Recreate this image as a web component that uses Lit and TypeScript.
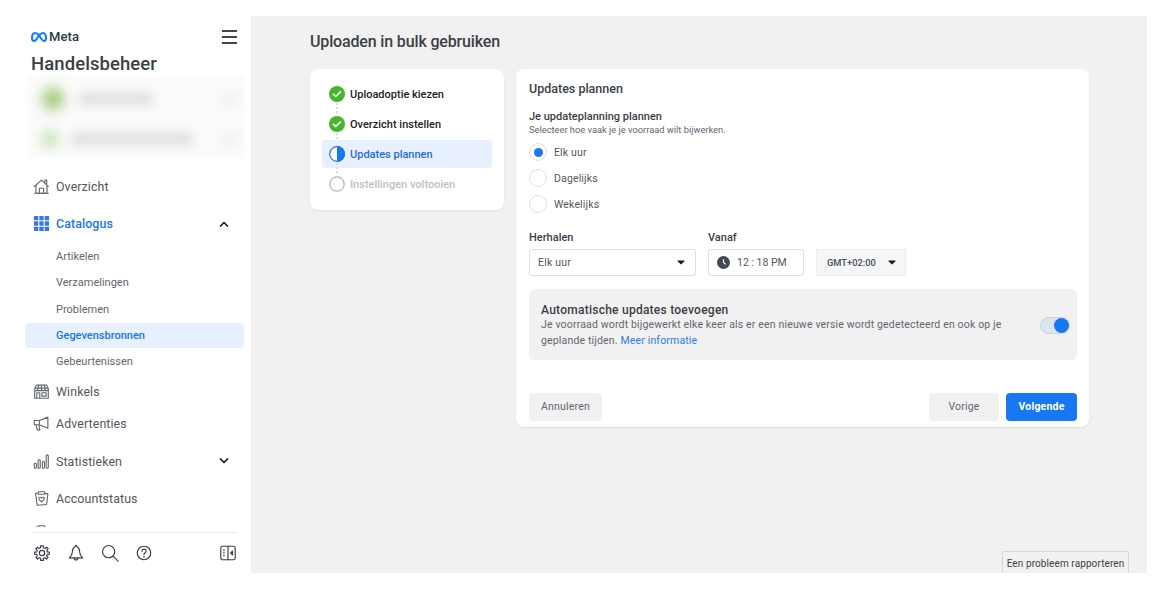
import { LitElement, html, css, svg } from "lit";
import { customElement } from "lit/decorators.js";

const ic = (body: unknown, size = 17, vb = "0 0 20 20") => html`<svg width=${size} height=${size} viewBox=${vb} fill="none" stroke="#606770" stroke-width="1.300" stroke-linecap="round" stroke-linejoin="round">${body}</svg>`;

const icons: Record<string, unknown> = {
  home: ic(svg`<path d="M1.500 10 10 2.500l8 7.500M3.500 8.500V18h13V8.500M14 4.500V2.500h2.200v4M7.500 18v-6h5v6"/><path d="M2 18h16"/>`),
  store: ic(svg`<path d="M4 2.500h12l2 4v2.500H2V6.500zM2 9v9h16V9M6.500 2.500 5.500 9M10 2.500V9M13.500 2.500l1 6.500M2.500 6h15M4.500 11.500h3.500V18H4.500zM10.500 11.500h5v4h-5z"/>`),
  ads: ic(svg`<path d="M1.500 6.500h6L17.500 2.500v13L7.500 11.500h-6zM3.500 11.500l1.500 6h3l-1-6M7.500 6.500v5"/>`),
  stats: ic(svg`<rect x="1.500" y="12" width="2.500" height="6" rx="1"/><rect x="6" y="8" width="2.500" height="10" rx="1"/><rect x="11" y="10" width="2.500" height="8" rx="1"/><rect x="15.500" y="2.500" width="2.500" height="15.500" rx="1"/>`),
  status: ic(svg`<path d="M5 3.500 3 4 5 18l11-1 1.500-12.500-3-.500M6.500 2h7l.500 3H6z"/><path d="M10 14l-3-3c-1.200-2 1.500-3.500 3-1.500 1.500-2 4.200-.5 3 1.500z"/>`),
};

const fsz = 18;
const foot = {
  gear: ic(svg`<circle cx="10" cy="10" r="3"/><path d="m8.300 2 .1 2.200-1.900.8L5 3.500 3.200 5.300 4.800 7 4 8.800l-2.200.1v2.400l2.200.1.800 1.800-1.600 1.600L5 16.700l1.500-1.500 1.900.8.100 2.200h3l.1-2.200 1.900-.8 1.500 1.500 1.800-1.800-1.600-1.600.8-1.800 2.200-.1V8.900L16 8.800 15.200 7l1.600-1.700L15 3.500l-1.500 1.500-1.900-.8-.1-2.200z"/>`, fsz),
  bell: ic(svg`<path d="M10 1.500c-1 0-1 1-1 1.500C6.500 4 6 6 6 8.500 6 11.500 4.500 13.500 2.500 15.500h15C15.500 13.500 14 11.500 14 8.500c0-2.500-.5-4.500-3-5.500 0-.5 0-1.500-1-1.500zM8 15.500c0 3 4 3 4 0"/>`, fsz),
  search: ic(svg`<circle cx="8.500" cy="8.500" r="6.800"/><path d="m13.500 13.500 5.500 5.500"/>`, fsz),
  help: ic(svg`<circle cx="10" cy="10" r="7.500"/><path d="M7.800 8c0-3 4.600-3 4.600 0 0 1.800-2.400 1.800-2.400 3.600"/><circle cx="10" cy="14" r=".4"/>`, fsz),
  panel: ic(svg`<rect x="2" y="2.500" width="16" height="15" rx="2"/><path d="M10 2.500v15M5.500 6v1M5.500 9v1M5.500 12v1"/><path d="M15 8v4l-2-2z" fill="#3b3f45"/>`, fsz),
};

const check = html`<svg class="stepi" width="16" height="16" viewBox="0 0 16 16"><circle cx="8" cy="8" r="8" fill="#42b72a"/><path d="m4.500 8.300 2.400 2.200 4.500-4.600" fill="none" stroke="#fff" stroke-width="1.700" stroke-linecap="round" stroke-linejoin="round"/></svg>`;
const half = html`<svg class="stepi" width="16" height="16" viewBox="0 0 16 16"><circle cx="8" cy="8" r="7.300" fill="#fff" stroke="#1877f2" stroke-width="1.200"/><path d="M8 0a8 8 0 0 1 0 16z" fill="#1877f2"/></svg>`;
const empty = html`<svg class="stepi" width="16" height="16" viewBox="0 0 16 16"><circle cx="8" cy="8" r="7.200" fill="#fff" stroke="#b4b7bb" stroke-width="1.300"/></svg>`;
const caret = html`<svg width="8" height="5" viewBox="0 0 10 6"><path d="M1 .5h8a.6.6 0 0 1 .4 1L5.400 5.300a.6.6 0 0 1-.8 0L.6 1.500a.6.6 0 0 1 .4-1z" fill="#1c1e21"/></svg>`;
const chevUp = html`<svg width="10" height="6" viewBox="0 0 10 6"><path d="m1.500 5 3.500-3.500L8.500 5" fill="none" stroke="#1c1e21" stroke-width="1.700" stroke-linecap="round" stroke-linejoin="round"/></svg>`;
const chevDown = html`<svg width="10" height="6" viewBox="0 0 10 6"><path d="m1.500 1 3.500 3.500L8.500 1" fill="none" stroke="#1c1e21" stroke-width="1.700" stroke-linecap="round" stroke-linejoin="round"/></svg>`;

@customElement("app-root")
export class AppRoot extends LitElement {
  static styles = css`
    :host { display: block; width: 1160px; height: 592px; background: #fff; font-family: Roboto, "Liberation Sans", sans-serif; color: #444950; overflow: hidden; }
    * { box-sizing: border-box; }
    .page { display: flex; height: 592px; padding: 16px 13px 19px 0; }
    .side { width: 251px; flex: none; display: flex; flex-direction: column; padding: 0 7px 0 0; }
    .brandrow { display: flex; align-items: center; justify-content: space-between; padding: 12px 7px 0 31px; height: 29px; }
    .meta { display: flex; align-items: center; gap: 2px; font-size: 13px; font-weight: 500; color: #2a3a44; letter-spacing: .1px; }
    .burger { display: flex; flex-direction: column; gap: 4px; width: 15px; }
    .burger i { display: block; height: 2px; background: #444950; }
    h1 { margin: 8px 0 0 31px; font-size: 18.500px; line-height: 22px; font-weight: 500; color: #3b3f45; letter-spacing: .08px; }
    .blurwrap { margin: 0 0 0 27px; height: 83px; width: 218px; overflow: hidden; background: #fbfbfb; display: flex; flex-direction: column; gap: 19px; padding-top: 12px; }
    .brow { display: flex; align-items: center; gap: 14px; filter: blur(6px); padding-left: 14px; }
    .dot { width: 24px; height: 24px; border-radius: 50%; background: #aed08c; flex: none; }
    .dot.s { width: 18px; height: 18px; background: #cbe4b8; }
    .bar { height: 10px; width: 74px; background: #d8d8d8; }
    .bar.l { width: 122px; margin-left: -2px; }
    .tail { width: 14px; height: 10px; background: #ececec; margin-left: auto; margin-right: 8px; }
    .nav { height: 360px; margin-top: 9px; overflow: hidden; padding-left: 25px; }
    .item { display: flex; align-items: center; padding: 0 15px 0 8px; gap: 6px; font-size: 12.400px; color: #53575d; }
    .item.nudge { padding-top: 2px; }
    .item .lab { flex: 1; letter-spacing: .1px; }
    .item.blue { color: #1877f2; font-weight: 500; }
    .sub { height: 26px; display: flex; align-items: center; padding-left: 31px; font-size: 11px; color: #606770; border-radius: 4px; }
    .sub.on { height: 25px; background: #e7f0fc; color: #1877f2; font-weight: 500; margin: 1px 0 0; }
    .sub.p { margin-top: 1px; }
    .footer { margin: 5px 7px 0 31px; border-top: 1px solid #ebebeb; height: 41px; display: flex; align-items: center; gap: 16px; padding-left: 2px; }
    .footer svg { display: block; stroke: #3b3f45; }
    .footer .push { margin-left: auto; }
    .main { flex: 1; background: #f1f1f1; padding: 14px 58px 0 59px; position: relative; }
    h2 { margin: 0; font-size: 16px; line-height: 24px; font-weight: 500; color: #3b3f45; letter-spacing: -.15px; }
    .cols { display: flex; gap: 12px; margin-top: 15px; align-items: flex-start; }
    .card { background: #fff; border-radius: 8px; box-shadow: 0 1px 2px rgba(0,0,0,.08); }
    .steps { width: 194px; height: 141px; padding: 11px 12px; }
    .step { height: 28px; margin-bottom: 2px; display: flex; align-items: center; gap: 5px; padding-left: 7px; font-size: 11px; font-weight: 500; color: #1c1e21; border-radius: 4px; position: relative; }
    .step:not(:last-child)::after { content: ""; position: absolute; left: 14px; top: 23px; height: 10px; border-left: 2px dotted #dedede; }
    .step.on { background: #e7f0fc; color: #1f6cdc; }
    .step.off { color: #bcc0c4; }
    .stepi { flex: none; position: relative; z-index: 1; }
    .form { width: 573px; height: 358px; padding: 12px 12px 6px 13px; display: flex; flex-direction: column; }
    h3 { margin: 0; font-size: 12.500px; line-height: 15px; font-weight: 500; color: #3b3f45; }
    .lbl { margin-top: 14px; font-size: 11px; line-height: 13px; font-weight: 500; color: #3b3f45; }
    .hint { font-size: 9.300px; line-height: 13px; color: #606770; }
    .radios { margin-top: 7px; display: flex; flex-direction: column; gap: 8px; }
    .radio { display: flex; align-items: center; gap: 7px; font-size: 10.500px; color: #53575d; letter-spacing: .15px; height: 18px; }
    .circle { width: 18px; height: 18px; border-radius: 50%; border: 1px solid #dddfe2; display: flex; align-items: center; justify-content: center; }
    .circle i { width: 9px; height: 9px; border-radius: 50%; background: #1877f2; }
    .fields { display: flex; align-items: flex-end; margin-top: 18px; gap: 12px; }
    .fgroup { display: flex; flex-direction: column; gap: 5px; }
    .flabel { font-size: 11px; line-height: 13px; font-weight: 500; color: #3b3f45; }
    .sel { height: 27px; border: 1px solid #dddfe2; border-radius: 3px; display: flex; align-items: center; background: #fff; font-size: 10.500px; color: #53575d; letter-spacing: .2px; }
    .sel.rep { width: 167px; padding: 0 10px 0 8px; justify-content: space-between; }
    .sel.time { width: 96px; padding: 0 8px; gap: 7px; letter-spacing: 0; }
    .tz { width: 90px; height: 27px; background: #f5f6f7; border: 1px solid #ebedf0; font-size: 9.300px; font-weight: 500; color: #4b4f56; display: flex; align-items: center; justify-content: space-between; padding: 0 9px 0 10px; }
    .banner { margin-top: 13px; height: 71px; border-radius: 6px; background: #f1f1f1; display: flex; align-items: center; padding: 1px 7px 0 12px; gap: 27px; }
    .btxt { flex: 1; }
    .btitle { margin-top: 1px; font-size: 12px; line-height: 14px; font-weight: 500; color: #3b3f45; letter-spacing: .25px; }
    .bdesc { font-size: 10.500px; line-height: 15.500px; color: #606770; letter-spacing: .16px; }
    .bdesc a { color: #3578e5; text-decoration: none; }
    .switch { width: 30px; height: 17px; border-radius: 9px; background: #dce4f0; border: 1px solid #ccd3e0; display: flex; justify-content: flex-end; align-items: center; flex: none; }
    .switch i { width: 15px; height: 15px; border-radius: 50%; background: #1877f2; display: block; }
    .actions { margin-top: auto; display: flex; gap: 7px; }
    .btn { height: 28px; border-radius: 4px; background: #f1f1f1; font-size: 10.500px; letter-spacing: .2px; color: #606770; display: flex; align-items: center; justify-content: center; padding-bottom: 2px; }
    .btn.c { width: 73px; }
    .btn.b { width: 70px; margin-left: auto; }
    .btn.n { width: 71px; background: #1877f2; color: #fff; font-weight: 700; }
    .report { position: absolute; right: 18px; bottom: 0; width: 127px; height: 22px; background: #f1f1f1; border: 1px solid #d3d5d8; border-bottom: none; border-radius: 2px 2px 0 0; font-size: 10px; letter-spacing: .1px; color: #3b3f45; display: flex; align-items: center; justify-content: center; padding-top: 1px; }
  `;

  private navRow(label: string, icon: unknown, h: number, tail?: unknown, cls = "") {
    return html`<div class="item ${cls}" style="height:${h}px">${icon}<span class="lab">${label}</span>${tail ?? ""}</div>`;
  }

  render() {
    const catIcon = html`<svg width="17" height="17" viewBox="0 0 18 18" fill="#3578e5">${[1, 6.700, 12.400].flatMap((y) => [1, 6.700, 12.400].map((x) => svg`<rect x=${x} y=${y} width="4.600" height="4.600" rx=".6"/>`))}</svg>`;
    return html`<div class="page">
      <aside class="side">
        <div class="brandrow">
          <div class="meta">
            <svg width="16" height="10" viewBox="0 0 32 20"><path d="M8 2C4 2 2 7 2 12c0 3.500 1.500 6 4.300 6 2.500 0 4-2 7-7l2.700-4.500C13.500 3.500 11.500 2 8 2zM16 6.500 19.500 12c2.500 4 4 6 6.500 6 2.800 0 4-2.700 4-6C30 7 27.500 2 24 2c-3 0-5.500 1.800-8 4.500z" fill="none" stroke="#0a7cff" stroke-width="4"/></svg>
            <span>Meta</span>
          </div>
          <div class="burger"><i></i><i></i><i></i></div>
        </div>
        <h1>Handelsbeheer</h1>
        <div class="blurwrap">
          <div class="brow"><span class="dot"></span><span class="bar"></span><span class="tail"></span></div>
          <div class="brow"><span class="dot s"></span><span class="bar l"></span><span class="tail"></span></div>
        </div>
        <nav class="nav">
          ${this.navRow("Overzicht", icons.home, 37, "", "nudge")}
          ${this.navRow("Catalogus", catIcon, 39, chevUp, "blue")}
          <div class="sub">Artikelen</div>
          <div class="sub">Verzamelingen</div>
          <div class="sub p">Problemen</div>
          <div class="sub on">Gegevensbronnen</div>
          <div class="sub">Gebeurtenissen</div>
          ${this.navRow("Winkels", icons.store, 33, "", "nudge")}
          ${this.navRow("Advertenties", icons.ads, 32)}
          ${this.navRow("Statistieken", icons.stats, 42, chevDown, "nudge")}
          ${this.navRow("Accountstatus", icons.status, 32, "", "nudge")}
          ${this.navRow("", icons.status, 38)}
        </nav>
        <div class="footer">
          ${foot.gear}${foot.bell}${foot.search}${foot.help}
          <span class="push">${foot.panel}</span>
        </div>
      </aside>
      <main class="main">
        <h2>Uploaden in bulk gebruiken</h2>
        <div class="cols">
          <section class="card steps">
            <div class="step">${check}Uploadoptie kiezen</div>
            <div class="step">${check}Overzicht instellen</div>
            <div class="step on">${half}Updates plannen</div>
            <div class="step off">${empty}Instellingen voltooien</div>
          </section>
          <section class="card form">
            <h3>Updates plannen</h3>
            <div class="lbl">Je updateplanning plannen</div>
            <div class="hint">Selecteer hoe vaak je je voorraad wilt bijwerken.</div>
            <div class="radios">
              <div class="radio"><span class="circle"><i></i></span>Elk uur</div>
              <div class="radio"><span class="circle"></span>Dagelijks</div>
              <div class="radio"><span class="circle"></span>Wekelijks</div>
            </div>
            <div class="fields">
              <div class="fgroup">
                <span class="flabel">Herhalen</span>
                <div class="sel rep">Elk uur ${caret}</div>
              </div>
              <div class="fgroup">
                <span class="flabel">Vanaf</span>
                <div class="sel time">
                  <svg width="13" height="13" viewBox="0 0 14 14"><circle cx="7" cy="7" r="7" fill="#444950"/><path d="M7 3.500V7l2.500 2" fill="none" stroke="#fff" stroke-width="1.200"/></svg>
                  12 : 18 PM
                </div>
              </div>
              <div class="tz">GMT+02:00 ${caret}</div>
            </div>
            <div class="banner">
              <div class="btxt">
                <div class="btitle">Automatische updates toevoegen</div>
                <div class="bdesc">Je voorraad wordt bijgewerkt elke keer als er een nieuwe versie wordt gedetecteerd en ook op je geplande tijden. <a>Meer informatie</a></div>
              </div>
              <div class="switch"><i></i></div>
            </div>
            <div class="actions">
              <div class="btn c">Annuleren</div>
              <div class="btn b">Vorige</div>
              <div class="btn n">Volgende</div>
            </div>
          </section>
        </div>
        <div class="report">Een probleem rapporteren</div>
      </main>
    </div>`;
  }
}
